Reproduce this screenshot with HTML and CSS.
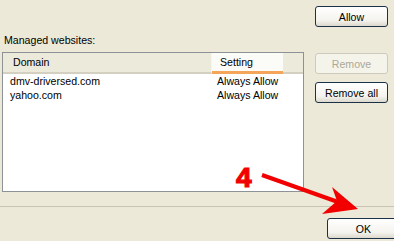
FILE: index.html
```html
<!DOCTYPE html>
<html>
  <head>
    <title>Managed websites</title>
    <link rel="stylesheet" href="styles.css">
  </head>

  <body>
    <div class="dialog">
      <div class="main">
        <div class="sites">
          <div class="label">Managed websites:</div>
          <div class="list">
            <div class="list-head">
              <div class="col col-domain">Domain</div>
              <div class="col col-setting">Setting</div>
              <div class="col col-rest"></div>
            </div>
            <div class="row">
              <span class="cell-domain">dmv-driversed.com</span>
              <span class="cell-setting">Always Allow</span>
            </div>
            <div class="row">
              <span class="cell-domain">yahoo.com</span>
              <span class="cell-setting">Always Allow</span>
            </div>
          </div>
        </div>

        <div class="actions">
          <button class="btn btn-allow">Allow</button>
          <button class="btn btn-remove" disabled>Remove</button>
          <button class="btn btn-remove-all">Remove all</button>
        </div>
      </div>

      <div class="footer">
        <button class="btn btn-ok">OK</button>
      </div>

      <!--step annotation drawn over the dialog-->
      <svg class="callout" width="394" height="241" viewBox="0 0 394 241">
        <text class="step" x="236" y="187">4</text>
        <line x1="262" y1="175" x2="338" y2="202" stroke="#f20000" stroke-width="4" />
        <polygon points="358,209 332,187 337,201 322,214" fill="#f20000" />
      </svg>
    </div>
  </body>
</html>
```

FILE: styles.css
```css
html, body {
  margin: 0;
  height: 100%;
}

body {
  background: #ece9d8;
  font-family: "Liberation Sans", Arial, sans-serif;
  font-size: 10.6px;
  color: #000;
  overflow: hidden;
}

.dialog {
  position: relative;
  width: 394px;
  height: 241px;
  overflow: hidden;
}

.main {
  display: flex;
  height: 206px;
}

.sites {
  margin-left: 2px;
  width: 302px;
  padding-top: 33px;
}

.label {
  height: 19px;
  line-height: 14px;
  padding-left: 2px;
}

.list {
  box-sizing: border-box;
  height: 140px;
  border: 1px solid #8d9296;
  background: #fff;
}

.list-head {
  display: flex;
  height: 21px;
  background: #ebeadb;
}

.col {
  box-sizing: border-box;
  height: 21px;
  line-height: 19px;
  border-bottom: 2px solid #d4d0c1;
}

.col-domain {
  width: 209px;
  padding-left: 10px;
  border-right: 1px solid #f6f5ee;
}

.col-setting {
  width: 71px;
  padding-left: 8px;
  background: #fbfbf8;
  border-bottom: 3px solid #f4a55a;
}

.col-rest {
  flex: 1;
}

.row {
  display: flex;
  height: 14px;
  line-height: 14px;
}

.cell-domain {
  width: 209px;
  padding-left: 7px;
  box-sizing: border-box;
}

.cell-setting {
  padding-left: 5px;
}

.actions {
  display: flex;
  flex-direction: column;
  margin-left: 11px;
  width: 73px;
}

.btn {
  box-sizing: border-box;
  width: 73px;
  height: 21px;
  padding: 0;
  border: 1px solid #1c3048;
  border-radius: 3px;
  background: linear-gradient(#ffffff, #f4f3ee 70%, #dcd8cc);
  font-family: "Liberation Sans", Arial, sans-serif;
  font-size: 10.6px;
  color: #000;
}

.btn-allow {
  margin-top: 6px;
}

.btn-remove {
  margin-top: 26px;
  border-color: #cdcabb;
  background: #f5f4ea;
  color: #aca899;
}

.btn-remove-all {
  margin-top: 8px;
}

.footer {
  border-top: 1px solid #c8c4b4;
  padding-top: 11px;
}

.btn-ok {
  margin-left: 327px;
}

.callout {
  position: absolute;
  left: 0;
  top: 0;
  pointer-events: none;
}

.step {
  font-family: "Liberation Sans", Arial, sans-serif;
  font-size: 28px;
  font-weight: bold;
  fill: #f20000;
  stroke: #f20000;
  stroke-width: 1.2px;
}
```
